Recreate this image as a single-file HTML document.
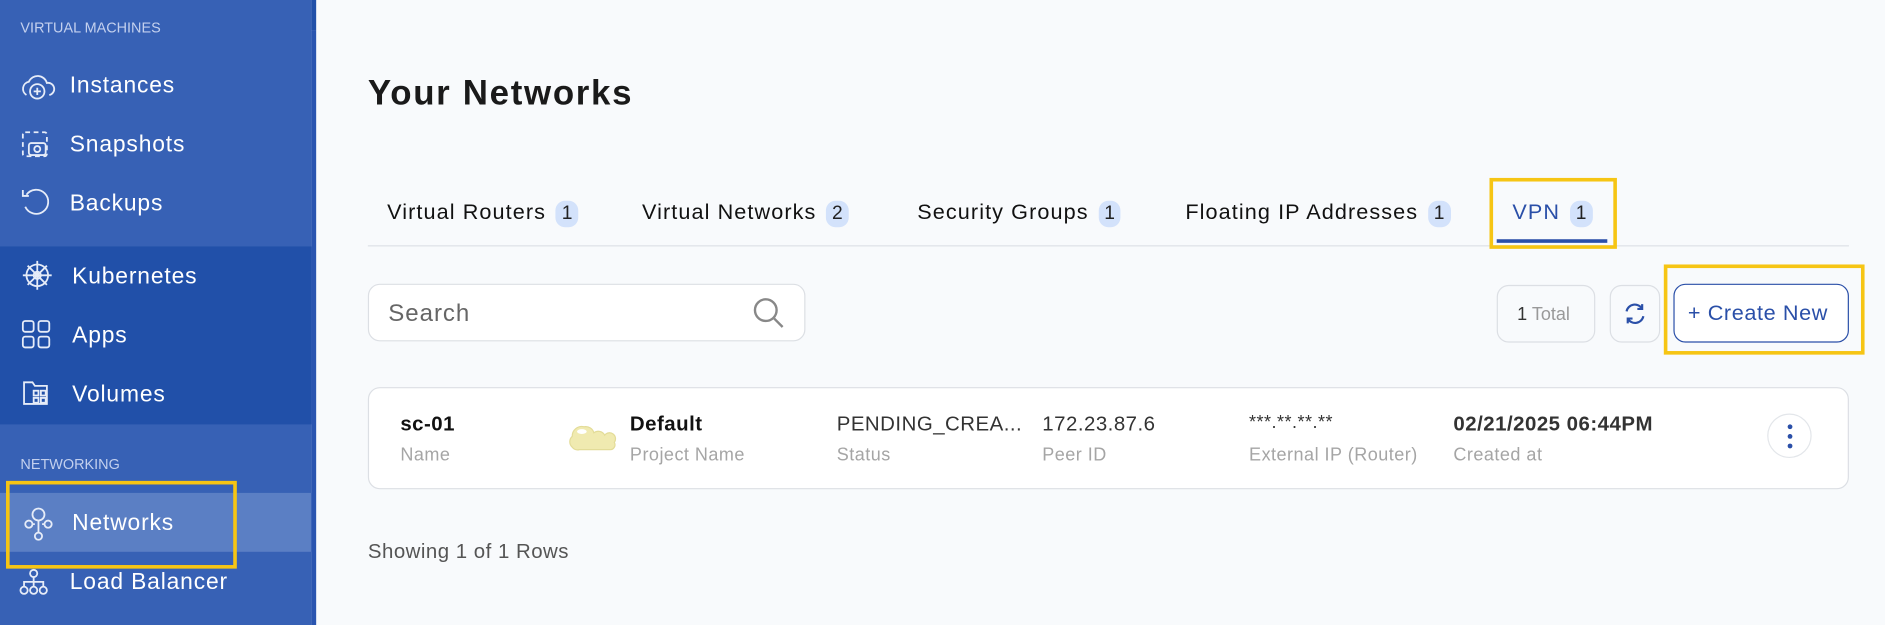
<!DOCTYPE html>
<html><head><meta charset="utf-8"><style>
*{margin:0;padding:0;box-sizing:border-box}
html,body{width:1885px;height:625px;overflow:hidden;background:#f8fafc;font-family:"Liberation Sans",sans-serif}
#w{position:absolute;left:0;top:0;width:1568px;height:520px;transform:scale(1.20217);transform-origin:0 0;background:#f8fafc}
.a{position:absolute}
.sb{left:0;top:0;width:259px;height:520px;background:#3761b5}
.dk{left:0;top:205px;width:259px;height:148px;background:#2150a9}
.hl{left:0;top:410px;width:259px;height:49px;background:#5b7fc4}
.bar{left:259px;top:25px;width:4px;height:495px;background:#2a55b0}
.bar2{left:259px;top:0;width:4px;height:25px;background:#2150a9}
.sec{color:#c3d0ee;font-size:12px;left:17px}
.it{color:#fff;font-size:19px;left:58px;letter-spacing:0.7px}
.tab{font-size:18px;color:#111;top:166px;letter-spacing:0.9px}
.bd{display:inline-block;background:#d3e2fb;border-radius:8px;font-size:16px;padding:2px 5px;margin-left:8px;color:#222;letter-spacing:0}
.yb{border:3px solid #f6c514}
.lab{font-size:15px;color:#a5a5a5;top:370px;letter-spacing:0.4px}
.val{font-size:17px;color:#333;top:343px;letter-spacing:0.4px}
</style></head><body><div id="w">
<div class="a sb"></div><div class="a dk"></div><div class="a hl"></div><div class="a bar"></div><div class="a bar2"></div>
<div class="a sec" style="top:16px">VIRTUAL MACHINES</div>
<div class="a sec" style="top:379px">NETWORKING</div>
<div class="a it" style="top:61px">Instances</div>
<div class="a it" style="top:110px">Snapshots</div>
<div class="a it" style="top:159px">Backups</div>
<div class="a it" style="top:220px;left:60px">Kubernetes</div>
<div class="a it" style="top:269px;left:60px">Apps</div>
<div class="a it" style="top:318px;left:60px">Volumes</div>
<div class="a it" style="top:425px;left:60px">Networks</div>
<div class="a it" style="top:474px">Load Balancer</div>
<svg class="a" style="left:0;top:0" width="60" height="520" fill="none" stroke="#e6ecf8" stroke-width="1.5">
<path d="M22 79a6 6 0 0 1 2-11a8 8 0 0 1 15 1a5 5 0 0 1 2 10"/><circle cx="31" cy="76" r="6"/><path d="M31 73v6M28 76h6"/>
<rect x="19" y="110" width="20" height="20" rx="2" stroke-dasharray="4 3"/><rect x="24" y="119" width="14" height="10" rx="2"/><circle cx="31" cy="124" r="2.5"/>
<path d="M22 162a10 10 0 1 1 -1 10M19 158v5h5"/>
<circle cx="31" cy="229" r="9"/><circle cx="31" cy="229" r="3"/><path d="M31 217v24M19 229h24M23 221l16 16M39 221l-16 16"/>
<rect x="19" y="267" width="9" height="9" rx="2"/><rect x="32" y="267" width="9" height="9" rx="2"/><rect x="19" y="280" width="9" height="9" rx="2"/><rect x="32" y="280" width="9" height="9" rx="2"/>
<path d="M20 318h7l2 3h10v15H20z"/><rect x="28" y="325" width="4" height="4"/><rect x="34" y="325" width="4" height="4"/><rect x="28" y="331" width="4" height="4"/><rect x="34" y="331" width="4" height="4"/>
<circle cx="32" cy="428" r="5"/><circle cx="24" cy="436" r="3"/><circle cx="40" cy="436" r="3"/><circle cx="32" cy="446" r="3"/><path d="M32 433v10M27 436h2M35 436h2"/>
<circle cx="28" cy="477" r="3"/><path d="M28 480v4M20 488v-4h16v4M28 484v4"/><circle cx="20" cy="491" r="3"/><circle cx="28" cy="491" r="3"/><circle cx="36" cy="491" r="3"/>
</svg>
<div class="a yb" style="left:5px;top:400px;width:192px;height:73px"></div>
<div class="a" style="left:306px;top:62px;font-size:29px;font-weight:bold;color:#1a1a1a;letter-spacing:1.4px">Your Networks</div>
<div class="a tab" style="left:322px">Virtual Routers<span class="bd">1</span></div>
<div class="a tab" style="left:534px">Virtual Networks<span class="bd">2</span></div>
<div class="a tab" style="left:763px">Security Groups<span class="bd">1</span></div>
<div class="a tab" style="left:986px">Floating IP Addresses<span class="bd">1</span></div>
<div class="a tab" style="left:1258px;color:#2a4fa8">VPN<span class="bd">1</span></div>
<div class="a" style="left:306px;top:204px;width:1232px;height:1px;background:#dde1e6"></div>
<div class="a" style="left:1245px;top:199px;width:92px;height:3px;background:#2a4fa8"></div>
<div class="a yb" style="left:1239px;top:148px;width:106px;height:59px"></div>
<div class="a" style="left:306px;top:236px;width:364px;height:48px;background:#fff;border:1px solid #dcdfe4;border-radius:10px"></div>
<div class="a" style="left:323px;top:250px;font-size:20px;color:#666;letter-spacing:0.8px">Search</div>
<svg class="a" style="left:624px;top:245px" width="30" height="30" fill="none" stroke="#888" stroke-width="2"><circle cx="13" cy="13" r="9"/><path d="M20 20l7 7"/></svg>
<div class="a" style="left:1245px;top:237px;width:82px;height:48px;border:1px solid #dcdfe4;border-radius:10px;font-size:15px;color:#999;padding:15px 0 0 16px"><span style="color:#333">1</span> Total</div>
<div class="a" style="left:1339px;top:237px;width:42px;height:48px;border:1px solid #dcdfe4;border-radius:10px"></div>
<svg class="a" style="left:1349px;top:250px" width="22" height="22" fill="none" stroke="#2a4fa8" stroke-width="1.8"><path d="M4 9a7 7 0 0 1 13-2M18 13a7 7 0 0 1-13 2M17 3v4h-4M5 19v-4h4"/></svg>
<div class="a" style="left:1392px;top:236px;width:146px;height:49px;border:1.5px solid #2a4fa8;border-radius:10px;background:#fff;color:#2a4fa8;font-size:18px;padding:13px 0 0 11px;letter-spacing:0.5px">+ Create New</div>
<div class="a yb" style="left:1384px;top:220px;width:167px;height:75px"></div>
<div class="a" style="left:306px;top:322px;width:1232px;height:85px;background:#fff;border:1px solid #dcdfe4;border-radius:10px"></div>
<div class="a val" style="left:333px;font-weight:bold;color:#111">sc-01</div><div class="a lab" style="left:333px">Name</div>
<svg class="a" style="left:470px;top:350px" width="48" height="30"><path d="M6 22a6 6 0 0 1 0-9a8 8 0 0 1 10-8a7 7 0 0 1 8 5a6 6 0 0 1 9 2a5 5 0 0 1 8 6a4 4 0 0 1-4 6h-25a6 6 0 0 1-6-2z" fill="#f0eab0" stroke="#e3dc98"/><ellipse cx="14" cy="9" rx="4" ry="2" fill="#fff"/></svg>
<div class="a val" style="left:524px;font-weight:bold;color:#111">Default</div><div class="a lab" style="left:524px">Project Name</div>
<div class="a val" style="left:696px">PENDING_CREA...</div><div class="a lab" style="left:696px">Status</div>
<div class="a val" style="left:867px">172.23.87.6</div><div class="a lab" style="left:867px">Peer ID</div>
<div class="a val" style="left:1039px;font-size:15px">***.**.**.**</div><div class="a lab" style="left:1039px">External IP (Router)</div>
<div class="a val" style="left:1209px;font-weight:bold">02/21/2025 06:44PM</div><div class="a lab" style="left:1209px">Created at</div>
<div class="a" style="left:1470px;top:344px;width:37px;height:37px;border:1px solid #e3e6ea;border-radius:50%;background:#fff"></div>
<svg class="a" style="left:1484px;top:351px" width="10" height="24" fill="#2a4fa8"><circle cx="5" cy="4" r="2"/><circle cx="5" cy="12" r="2"/><circle cx="5" cy="20" r="2"/></svg>
<div class="a" style="left:306px;top:449px;font-size:17px;color:#555;letter-spacing:0.4px">Showing 1 of 1 Rows</div>
</div></body></html>
